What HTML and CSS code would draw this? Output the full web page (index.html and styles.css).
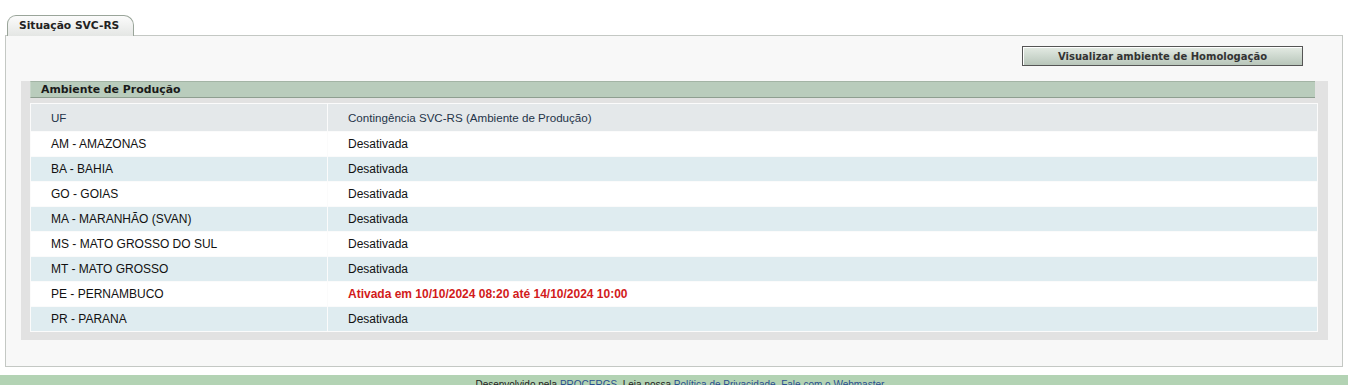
FILE: index.html
```html
<!DOCTYPE html>
<html lang="pt-BR">
<head>
<meta charset="utf-8">
<title>Situação SVC-RS</title>
<link rel="stylesheet" href="styles.css">
</head>
<body>
<div class="page">
  <div class="tabs"><span class="tab">Situação SVC-RS</span></div>
  <div class="panel">
    <div class="toolbar"><button class="btn">Visualizar ambiente de Homologação</button></div>
    <div class="box">
      <div class="legend">Ambiente de Produção</div>
      <table class="grid">
        <thead>
          <tr><th class="c1">UF</th><th>Contingência SVC-RS (Ambiente de Produção)</th></tr>
        </thead>
        <tbody>
          <tr><td>AM - AMAZONAS</td><td>Desativada</td></tr>
          <tr class="alt"><td>BA - BAHIA</td><td>Desativada</td></tr>
          <tr><td>GO - GOIAS</td><td>Desativada</td></tr>
          <tr class="alt"><td>MA - MARANHÃO (SVAN)</td><td>Desativada</td></tr>
          <tr><td>MS - MATO GROSSO DO SUL</td><td>Desativada</td></tr>
          <tr class="alt"><td>MT - MATO GROSSO</td><td>Desativada</td></tr>
          <tr><td>PE - PERNAMBUCO</td><td class="on">Ativada em 10/10/2024 08:20 até 14/10/2024 10:00</td></tr>
          <tr class="alt"><td>PR - PARANA</td><td>Desativada</td></tr>
        </tbody>
      </table>
    </div>
  </div>
</div>
<div class="footer">Desenvolvido pela <a href="#">PROCERGS</a>. Leia nossa <a href="#">Política de Privacidade</a>. <a href="#">Fale com o Webmaster</a>.</div>
</body>
</html>
```

FILE: styles.css
```css
html, body { margin: 0; padding: 0; background: #fff; }
body { font-family: "Liberation Sans", Arial, sans-serif; font-size: 12px; color: #111; }

.page { padding: 15px 5px 0 5px; }

.tabs { display: flex; padding-left: 2px; height: 20px; }
.tab {
  display: block;
  box-sizing: border-box;
  width: 127px;
  height: 21px;
  padding: 3px 0 0 11px;
  border: 1px solid #9aa59a;
  border-bottom: none;
  border-radius: 9px 10px 0 0;
  background: linear-gradient(#fbfbfb, #e4e6e4);
  font-family: "DejaVu Sans", Verdana, sans-serif;
  font-weight: bold;
  font-size: 10.7px;
  color: #222;
  position: relative;
  z-index: 1;
}

.panel {
  box-sizing: border-box;
  height: 332px;
  border: 1px solid #c4c8c4;
  background: #f8f8f8;
  padding: 10px 14px 0 15px;
}

.toolbar { display: flex; justify-content: flex-end; padding-right: 25px; }
.btn {
  box-sizing: border-box;
  width: 281px;
  height: 20px;
  border: 1px solid #555;
  background: linear-gradient(#e4ebe4, #b8c6ba);
  font-family: "DejaVu Sans", Verdana, sans-serif;
  font-weight: bold;
  font-size: 10px;
  color: #333;
  padding: 0;
  box-shadow: inset 1px 1px 0 #fff;
}

.box {
  margin-top: 23px;
  background: #e2e2e2;
  padding: 0 10px 8px 9px;
}
.legend {
  box-sizing: border-box;
  height: 17px;
  margin: -8px 3px 5px 0;
  border-top: 1px solid #a3b4a5;
  border-bottom: 1px solid #8e9e90;
  border-left: 1px solid #c8d6ca;
  background: #b9ccbc;
  padding: 1px 0 0 10px;
  font-family: "DejaVu Sans", Verdana, sans-serif;
  font-weight: bold;
  font-size: 10.9px;
  color: #1a1a1a;
}

.grid {
  width: 100%;
  border-collapse: separate;
  border-spacing: 1px;
  background: #fbfbfb;
}
.grid th {
  height: 27px;
  background: #e4e8ea;
  text-align: left;
  font-weight: normal;
  font-size: 11.6px;
  color: #243449;
  padding: 0 0 0 20px;
}
.grid th.c1 { width: 276px; }
.grid td {
  height: 24px;
  padding: 0 0 0 20px;
  background: #fff;
  font-size: 12px;
  color: #111;
}
.grid tr.alt td { background: #dfecf0; }
.grid td.on { color: #d21b1b; font-weight: bold; }

.footer {
  margin-top: 8px;
  height: 20px;
  background: #b3d3b4;
  text-align: center;
  font-size: 10px;
  padding: 4px 0 0 14px;
  color: #222;
}
.footer a { color: #2a4f8f; text-decoration: none; }
```
